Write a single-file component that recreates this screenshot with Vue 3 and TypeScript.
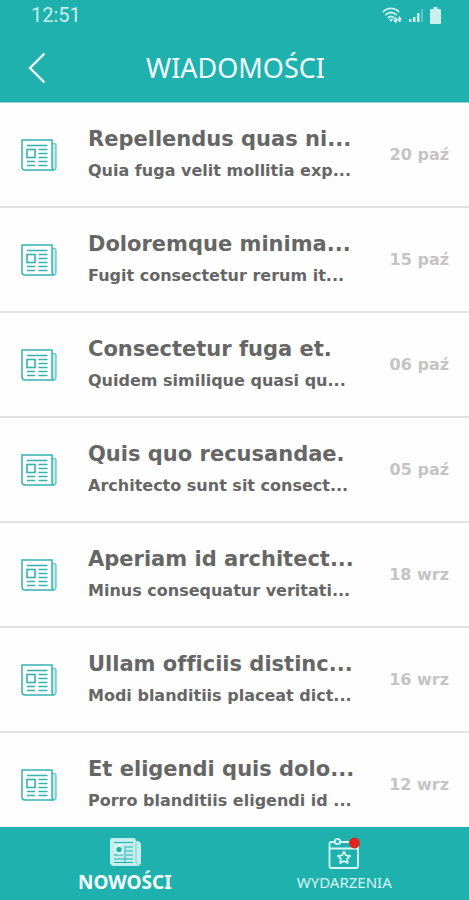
<script setup lang="ts">
import { ref } from 'vue'

interface NewsItem {
  title: string
  excerpt: string
  date: string
}

const items: NewsItem[] = [
  { title: 'Repellendus quas ni...', excerpt: 'Quia fuga velit mollitia exp...', date: '20 paź' },
  { title: 'Doloremque minima...', excerpt: 'Fugit consectetur rerum it...', date: '15 paź' },
  { title: 'Consectetur fuga et.', excerpt: 'Quidem similique quasi qu...', date: '06 paź' },
  { title: 'Quis quo recusandae.', excerpt: 'Architecto sunt sit consect...', date: '05 paź' },
  { title: 'Aperiam id architect...', excerpt: 'Minus consequatur veritati...', date: '18 wrz' },
  { title: 'Ullam officiis distinc...', excerpt: 'Modi blanditiis placeat dict...', date: '16 wrz' },
  { title: 'Et eligendi quis dolo...', excerpt: 'Porro blanditiis eligendi id ...', date: '12 wrz' },
]

const tab = ref<'news' | 'events'>('news')
</script>

<template>
  <div class="screen">
    <header class="top">
      <div class="status">
        <span class="clock">12:51</span>
        <div class="signals">
          <svg class="wifi" viewBox="0 0 20 17" aria-hidden="true">
            <g fill="none" stroke="currentColor" stroke-width="1.8">
              <path d="M0.8 5.2C5.5 0.2 12.5 0.2 17.2 5.2" />
              <path d="M3.3 8.2C6.8 4.6 11.2 4.6 14.7 8.2" />
              <path d="M5.8 11C8 9 10 9 12.2 11" />
            </g>
            <path d="M7 12.5Q9 11 11 12.5L9 15Z" fill="currentColor" />
            <path d="M11 12.500H12.500V10.500H14.800V12.500H16.300L13.700 16.500ZM15.200 12.500L17.600 9L20 12.500H18.700V15H16.500V12.500Z" fill="currentColor" />
          </svg>
          <svg class="cell" viewBox="0 0 14 14" aria-hidden="true">
            <path d="M0 11H2.500V14H0ZM4 9H6.500V14H4ZM8 5H10.500V14H8Z" fill="currentColor" />
            <path d="M12 1H14V14H12Z" fill="currentColor" opacity="0.35" />
          </svg>
          <svg class="battery" viewBox="0 0 11 17" aria-hidden="true">
            <path d="M3.500 0H7.500V2H10Q11 2 11 3V16Q11 17 10 17H1Q0 17 0 16V3Q0 2 1 2H3.500Z" fill="currentColor" />
          </svg>
        </div>
      </div>
      <div class="bar">
        <button class="back" type="button" aria-label="Wstecz">
          <svg viewBox="0 0 18 32" aria-hidden="true">
            <path d="M16.500 1.500L2 16L16.500 30.500" fill="none" stroke="currentColor" stroke-width="2.400" />
          </svg>
        </button>
        <h1>WIADOMOŚCI</h1>
      </div>
    </header>

    <main class="list">
      <a v-for="item in items" :key="item.title" class="row" href="#">
        <svg class="paper" viewBox="0 0 36 32" aria-hidden="true">
          <path d="M31 4.500H33Q35 4.500 35 6.500V28Q35 31 32.500 31Q31 30 31 27.500Z" fill="#c9ebea" />
          <g fill="none" stroke="currentColor">
            <path d="M1 1H31V27.500Q31 31 33 31H4Q1 31 1 28Z" stroke-width="1.500" />
            <path d="M31 4.500H33Q35 4.500 35 6.500V28Q35 31 32.500 31" stroke-width="1.500" opacity="0.650" />
            <rect x="6" y="10.500" width="8" height="8" stroke-width="1.600" />
            <path d="M6 6.500H26.500M17.500 10.500H26.500M17.500 14.500H26.500M17.500 18.500H26.500M6 22.500H14M17.500 22.500H26.500M6 26.500H14M17.500 26.500H26.500" stroke-width="1.400" />
          </g>
        </svg>
        <div class="copy">
          <h2>{{ item.title }}</h2>
          <p>{{ item.excerpt }}</p>
        </div>
        <time>{{ item.date }}</time>
      </a>
    </main>

    <nav class="tabs">
      <button type="button" :class="{ active: tab === 'news' }" @click="tab = 'news'">
        <svg viewBox="0 0 32 32" aria-hidden="true">
          <path d="M3 1H24Q27 1 27 4H29Q32 5 32 8V25Q32 29 28 29H5Q1 29 1 25V3Q1 1 3 1Z" fill="currentColor" opacity="0.780" />
          <path d="M27 4V24Q27 27 29 28" fill="none" stroke="#1fb1ae" stroke-width="0.800" opacity="0.600" />
          <g fill="none" stroke="#1fb1ae" stroke-width="1">
            <path d="M5 5.500H24M17 10H24M17 14H24M17 18H24M5 22H24M5 25.500H24M5 18H14M16 9V26" />
            <circle cx="10" cy="12.500" r="4.500" stroke="currentColor" />
          </g>
          <circle cx="10" cy="12.500" r="2.600" fill="#1fb1ae" />
        </svg>
        <span>NOWOŚCI</span>
      </button>
      <button type="button" :class="{ active: tab === 'events' }" @click="tab = 'events'">
        <svg viewBox="0 0 32 32" aria-hidden="true">
          <g fill="none" stroke="currentColor" stroke-width="1.800" stroke-linejoin="round">
            <path d="M7 5H3.500Q1.500 5 1.500 7V29Q1.500 31 3.500 31H28Q30 31 30 29V7M12 5H21M1.500 11.500H30" />
            <circle cx="9.500" cy="4.500" r="2.700" />
            <path d="M16 14.500L17.900 18.300L22.100 18.900L19.100 21.900L19.800 26L16 24.100L12.200 26L12.900 21.900L9.900 18.900L14.100 18.300Z" />
          </g>
          <circle cx="26.500" cy="6" r="5.400" fill="#e0251f" />
        </svg>
        <span>WYDARZENIA</span>
      </button>
    </nav>
  </div>
</template>

<style>
body {
  margin: 0;
}
</style>

<style scoped>
.screen {
  display: flex;
  flex-direction: column;
  height: 100vh;
  font-family: 'Noto Sans', sans-serif;
  background: #fefefe;
}

.top {
  flex: none;
  color: #f2fffe;
  background: #1fb1ae;
  border-bottom: 1px solid #8fd3d1;
}

.status {
  display: flex;
  align-items: center;
  justify-content: space-between;
  height: 30px;
  padding: 0 28px 0 31px;
  color: #c9f0ee;
}

.clock {
  font: 20px/30px Roboto, sans-serif;
}

.signals {
  display: flex;
  align-items: center;
  gap: 7px;
}

.wifi {
  width: 20px;
  height: 17px;
}

.cell {
  width: 14px;
  height: 14px;
}

.battery {
  width: 11px;
  height: 17px;
}

.bar {
  display: grid;
  grid-template-columns: 74px 1fr 72px;
  align-items: center;
  height: 68px;
  padding-top: 4px;
}

.back {
  display: flex;
  padding: 0 28px;
  color: inherit;
  background: none;
  border: 0;
}

.back svg {
  flex: none;
  width: 18px;
  height: 32px;
}

h1 {
  margin: 0;
  font-size: 27px;
  font-weight: 400;
  line-height: 36px;
  text-align: center;
}

.list {
  flex: 1;
  min-height: 0;
  overflow: hidden;
  font-family: 'DejaVu Sans', sans-serif;
  font-variant-ligatures: none;
}

.row {
  display: flex;
  align-items: center;
  box-sizing: border-box;
  height: 105px;
  padding: 0 20px 0 21px;
  color: #666;
  text-decoration: none;
  border-bottom: 2px solid #e2e2e2;
}

.paper {
  flex: none;
  width: 36px;
  height: 32px;
  color: #35b3b1;
}

.copy {
  flex: 1;
  min-width: 0;
  padding-bottom: 2px;
  margin-left: 31px;
  white-space: nowrap;
}

h2,
p {
  margin: 0;
  font-weight: 700;
}

h2 {
  font-size: 21px;
  line-height: 34px;
}

p {
  font-size: 16px;
  line-height: 30px;
}

time {
  flex: none;
  font-size: 16px;
  font-weight: 700;
  color: #c4c4c4;
}

.tabs {
  display: grid;
  flex: none;
  grid-template-columns: 1fr 1fr;
  height: 73px;
  padding: 0 15px;
  box-sizing: border-box;
  background: #1fb1ae;
}

.tabs button {
  display: flex;
  flex-direction: column;
  align-items: center;
  padding: 10px 0 0;
  font: inherit;
  font-size: 15px;
  line-height: 26px;
  color: #d6f5f4;
  background: none;
  border: 0;
}

.tabs svg {
  width: 32px;
  height: 32px;
}

.tabs .active {
  font-size: 19px;
  font-weight: 700;
  color: #f4ffff;
}
</style>
